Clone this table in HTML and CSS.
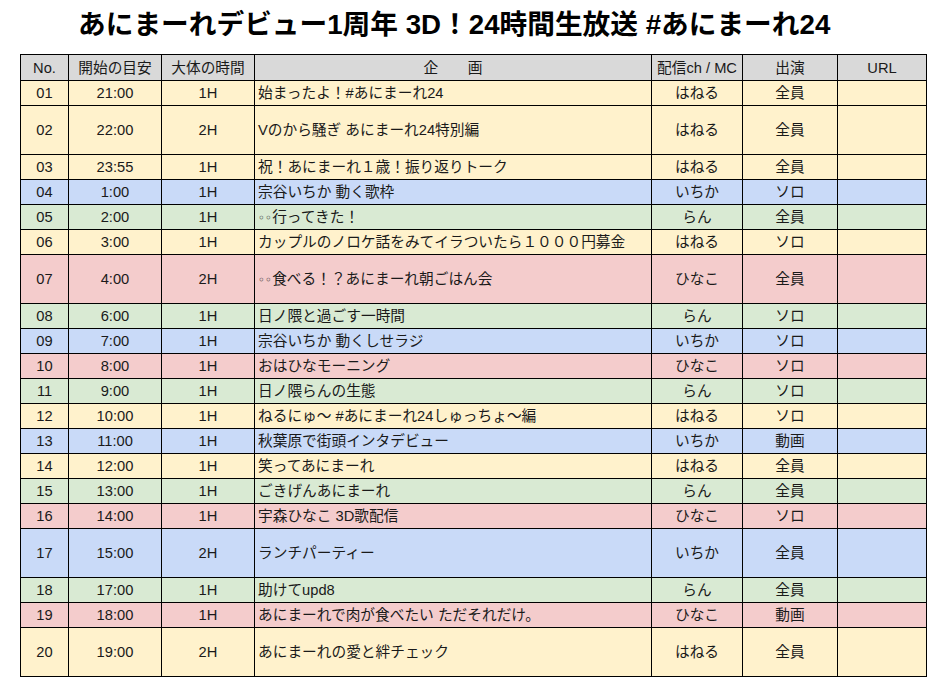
FILE: index.html
```html
<!DOCTYPE html>
<html lang="ja">
<head>
<meta charset="utf-8">
<link rel="stylesheet" href="styles.css">
</head>
<body>
<h1 class="title">あにまーれデビュー1周年 3D！24時間生放送 #あにまーれ24</h1>
<table class="sched">
  <colgroup>
    <col class="c-no"><col class="c-start"><col class="c-dur"><col class="c-plan"><col class="c-mc"><col class="c-cast"><col class="c-url">
  </colgroup>
  <thead>
    <tr class="head"><th>No.</th><th>開始の目安</th><th>大体の時間</th><th>企　　画</th><th>配信ch / MC</th><th>出演</th><th>URL</th></tr>
  </thead>
  <tbody>
    <tr class="y"><td>01</td><td>21:00</td><td>1H</td><td class="plan">始まったよ！#あにまーれ24</td><td>はねる</td><td>全員</td><td></td></tr>
    <tr class="y tall"><td>02</td><td>22:00</td><td>2H</td><td class="plan">Vのから騒ぎ あにまーれ24特別編</td><td>はねる</td><td>全員</td><td></td></tr>
    <tr class="y"><td>03</td><td>23:55</td><td>1H</td><td class="plan">祝！あにまーれ１歳！振り返りトーク</td><td>はねる</td><td>全員</td><td></td></tr>
    <tr class="b"><td>04</td><td>1:00</td><td>1H</td><td class="plan">宗谷いちか 動く歌枠</td><td>いちか</td><td>ソロ</td><td></td></tr>
    <tr class="g"><td>05</td><td>2:00</td><td>1H</td><td class="plan"><span class="oo">◦◦</span>行ってきた！</td><td>らん</td><td>全員</td><td></td></tr>
    <tr class="y"><td>06</td><td>3:00</td><td>1H</td><td class="plan">カップルのノロケ話をみてイラついたら１０００円募金</td><td>はねる</td><td>ソロ</td><td></td></tr>
    <tr class="p tall"><td>07</td><td>4:00</td><td>2H</td><td class="plan"><span class="oo">◦◦</span>食べる！？あにまーれ朝ごはん会</td><td>ひなこ</td><td>全員</td><td></td></tr>
    <tr class="g"><td>08</td><td>6:00</td><td>1H</td><td class="plan">日ノ隈と過ごす一時間</td><td>らん</td><td>ソロ</td><td></td></tr>
    <tr class="b"><td>09</td><td>7:00</td><td>1H</td><td class="plan">宗谷いちか 動くしせラジ</td><td>いちか</td><td>ソロ</td><td></td></tr>
    <tr class="p"><td>10</td><td>8:00</td><td>1H</td><td class="plan">おはひなモーニング</td><td>ひなこ</td><td>ソロ</td><td></td></tr>
    <tr class="g"><td>11</td><td>9:00</td><td>1H</td><td class="plan">日ノ隈らんの生態</td><td>らん</td><td>ソロ</td><td></td></tr>
    <tr class="y"><td>12</td><td>10:00</td><td>1H</td><td class="plan">ねるにゅ～ #あにまーれ24しゅっちょ～編</td><td>はねる</td><td>ソロ</td><td></td></tr>
    <tr class="b"><td>13</td><td>11:00</td><td>1H</td><td class="plan">秋葉原で街頭インタデビュー</td><td>いちか</td><td>動画</td><td></td></tr>
    <tr class="y"><td>14</td><td>12:00</td><td>1H</td><td class="plan">笑ってあにまーれ</td><td>はねる</td><td>全員</td><td></td></tr>
    <tr class="g"><td>15</td><td>13:00</td><td>1H</td><td class="plan">ごきげんあにまーれ</td><td>らん</td><td>全員</td><td></td></tr>
    <tr class="p"><td>16</td><td>14:00</td><td>1H</td><td class="plan">宇森ひなこ 3D歌配信</td><td>ひなこ</td><td>ソロ</td><td></td></tr>
    <tr class="b tall"><td>17</td><td>15:00</td><td>2H</td><td class="plan">ランチパーティー</td><td>いちか</td><td>全員</td><td></td></tr>
    <tr class="g"><td>18</td><td>17:00</td><td>1H</td><td class="plan">助けてupd8</td><td>らん</td><td>全員</td><td></td></tr>
    <tr class="p"><td>19</td><td>18:00</td><td>1H</td><td class="plan">あにまーれで肉が食べたい ただそれだけ。</td><td>ひなこ</td><td>動画</td><td></td></tr>
    <tr class="y tall"><td>20</td><td>19:00</td><td>2H</td><td class="plan">あにまーれの愛と絆チェック</td><td>はねる</td><td>全員</td><td></td></tr>
  </tbody>
</table>
</body>
</html>
```
FILE: styles.css
```css
html, body {
  margin: 0;
  padding: 0;
  background: #ffffff;
}
body {
  font-family: "Liberation Sans", "Noto Sans CJK JP", sans-serif;
  color: #1a1a1a;
}
.title {
  margin: 0;
  height: 54px;
  box-sizing: border-box;
  padding: 8px 0 0 78px;
  font-size: 27.7px;
  line-height: 34px;
  font-weight: bold;
  color: #000;
  white-space: nowrap;
}
.sched {
  margin-left: 20px;
  border-collapse: collapse;
  table-layout: fixed;
  width: 907px;
  font-size: 14.7px;
}
.c-no { width: 48px; }
.c-start { width: 93px; }
.c-dur { width: 93px; }
.c-plan { width: 397px; }
.c-mc { width: 91px; }
.c-cast { width: 95px; }
.c-url { width: 89px; }
.sched th, .sched td {
  border: 1px solid #000;
  padding: 0 3px;
  text-align: center;
  vertical-align: middle;
  font-weight: normal;
  white-space: nowrap;
  overflow: hidden;
  line-height: 18px;
}
.sched tr { height: 25px; }
.sched tr.head { height: 26px; background: #d9d9d9; }
.sched tr.tall { height: 49px; }
.sched td.plan { text-align: left; }
.oo { font-family: "DejaVu Sans", sans-serif; font-size: 12px; }
.y { background: #fff2cc; }
.b { background: #c9daf8; }
.g { background: #d9ead3; }
.p { background: #f4cccc; }
```
